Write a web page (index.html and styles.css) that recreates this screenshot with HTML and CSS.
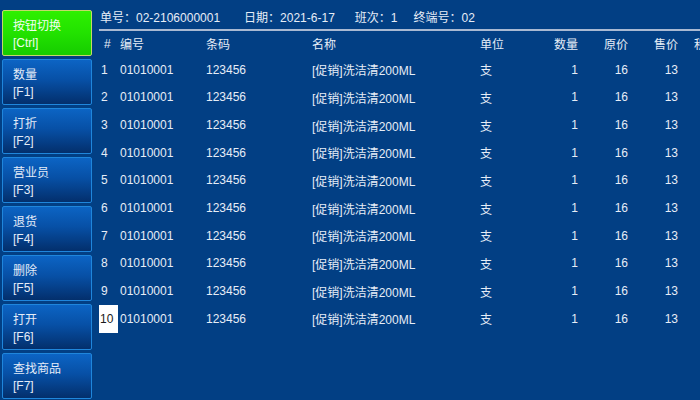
FILE: index.html
```html
<!DOCTYPE html>
<html lang="zh">
<head>
<meta charset="utf-8">
<title>POS</title>
<link rel="stylesheet" href="styles.css">
</head>
<body>
<div class="app">
  <div class="side">
    <div class="btn btn-green"><div>按钮切换</div><div>[Ctrl]</div></div>
    <div class="btn"><div>数量</div><div>[F1]</div></div>
    <div class="btn"><div>打折</div><div>[F2]</div></div>
    <div class="btn"><div>营业员</div><div>[F3]</div></div>
    <div class="btn"><div>退货</div><div>[F4]</div></div>
    <div class="btn"><div>删除</div><div>[F5]</div></div>
    <div class="btn"><div>打开</div><div>[F6]</div></div>
    <div class="btn"><div>查找商品</div><div>[F7]</div></div>
  </div>
  <div class="main">
    <div class="info">
      <span class="i-no">单号：02-2106000001</span>
      <span class="i-date">日期：2021-6-17</span>
      <span class="i-shift">班次：1</span>
      <span class="i-term">终端号：02</span>
    </div>
    <table class="grid">
      <colgroup>
        <col class="c-idx"><col class="c-code"><col class="c-bar"><col class="c-name">
        <col class="c-unit"><col class="c-qty"><col class="c-price"><col class="c-sale"><col class="c-pts">
      </colgroup>
      <thead>
        <tr><th class="idx">#</th><th>编号</th><th>条码</th><th>名称</th><th>单位</th><th class="r">数量</th><th class="r">原价</th><th class="r">售价</th><th class="pts">积分</th></tr>
      </thead>
      <tbody>
        <tr><td>1</td><td>01010001</td><td>123456</td><td>[促销]洗洁清200ML</td><td>支</td><td class="r">1</td><td class="r">16</td><td class="r">13</td><td></td></tr>
        <tr><td>2</td><td>01010001</td><td>123456</td><td>[促销]洗洁清200ML</td><td>支</td><td class="r">1</td><td class="r">16</td><td class="r">13</td><td></td></tr>
        <tr><td>3</td><td>01010001</td><td>123456</td><td>[促销]洗洁清200ML</td><td>支</td><td class="r">1</td><td class="r">16</td><td class="r">13</td><td></td></tr>
        <tr><td>4</td><td>01010001</td><td>123456</td><td>[促销]洗洁清200ML</td><td>支</td><td class="r">1</td><td class="r">16</td><td class="r">13</td><td></td></tr>
        <tr><td>5</td><td>01010001</td><td>123456</td><td>[促销]洗洁清200ML</td><td>支</td><td class="r">1</td><td class="r">16</td><td class="r">13</td><td></td></tr>
        <tr><td>6</td><td>01010001</td><td>123456</td><td>[促销]洗洁清200ML</td><td>支</td><td class="r">1</td><td class="r">16</td><td class="r">13</td><td></td></tr>
        <tr><td>7</td><td>01010001</td><td>123456</td><td>[促销]洗洁清200ML</td><td>支</td><td class="r">1</td><td class="r">16</td><td class="r">13</td><td></td></tr>
        <tr><td>8</td><td>01010001</td><td>123456</td><td>[促销]洗洁清200ML</td><td>支</td><td class="r">1</td><td class="r">16</td><td class="r">13</td><td></td></tr>
        <tr><td>9</td><td>01010001</td><td>123456</td><td>[促销]洗洁清200ML</td><td>支</td><td class="r">1</td><td class="r">16</td><td class="r">13</td><td></td></tr>
        <tr><td class="sel">10</td><td>01010001</td><td>123456</td><td>[促销]洗洁清200ML</td><td>支</td><td class="r">1</td><td class="r">16</td><td class="r">13</td><td></td></tr>
      </tbody>
    </table>
  </div>
</div>
</body>
</html>
```

FILE: styles.css
```css
html, body {
  margin: 0;
  padding: 0;
  width: 700px;
  height: 400px;
  overflow: hidden;
  background: #023f84;
  font-family: "Liberation Sans", "Noto Sans CJK SC", sans-serif;
  font-size: 12px;
  color: #e6edf7;
}

.app {
  display: flex;
  width: 700px;
  height: 400px;
}

.side {
  flex: 0 0 auto;
  width: 90px;
  padding: 10px 7px 0 2px;
  display: flex;
  flex-direction: column;
  gap: 3px;
}

.btn {
  box-sizing: border-box;
  height: 46px;
  border: 1px solid #1f86dc;
  border-radius: 2px;
  background: linear-gradient(to bottom, #0c64c4 0%, #0750a6 45%, #032f6c 100%);
  color: #e4ecf8;
  padding: 7px 0 0 10px;
  line-height: 16.5px;
  font-size: 12px;
}

.btn-green {
  border-color: #c6d86a;
  background: linear-gradient(to bottom, #2ef000 0%, #22e200 50%, #16cc00 100%);
  color: #f2fff0;
}

.main {
  flex: 1 1 auto;
  min-width: 0;
  overflow: hidden;
}

.info {
  display: flex;
  white-space: nowrap;
  height: 19px;
  padding: 10px 0 0 1px;
  line-height: 16px;
  border-bottom: 2px solid #a9b9d2;
  box-sizing: content-box;
}

.info span { flex: 0 0 auto; }
.i-date { margin-left: 24px; }
.i-shift { margin-left: 20px; }
.i-term { margin-left: 16px; }

.grid {
  table-layout: fixed;
  border-collapse: collapse;
  width: 640px;
  white-space: nowrap;
}

.c-idx { width: 19px; }
.c-code { width: 86px; }
.c-bar { width: 106px; }
.c-name { width: 168px; }
.c-unit { width: 50px; }
.c-qty { width: 52px; }
.c-price { width: 50px; }
.c-sale { width: 50px; }
.c-pts { width: 59px; }

.grid th {
  height: 25px;
  padding: 0 0 0 2px;
  font-weight: normal;
  text-align: left;
  vertical-align: middle;
  overflow: hidden;
}

.grid th.idx { padding-left: 5px; }
.grid th.pts { padding-left: 14px; }

.grid td {
  height: 27.67px;
  padding: 0 0 0 2px;
  vertical-align: middle;
  overflow: hidden;
}

.grid .r {
  text-align: right;
  padding: 0 2px 0 0;
}

.grid td.sel {
  background: #ffffff;
  color: #1a1a1a;
  padding-left: 1px;
}
```
